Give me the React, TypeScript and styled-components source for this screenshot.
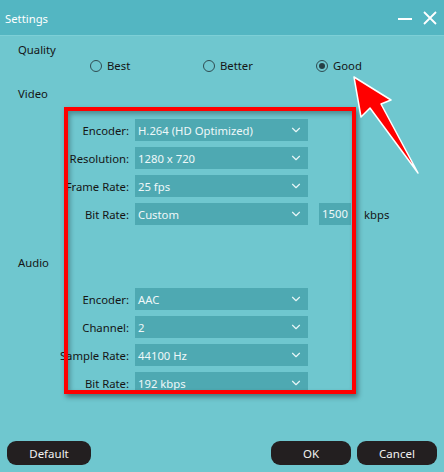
import { Fragment } from 'react'
import styled, { createGlobalStyle } from 'styled-components'
import { ChevronDown } from 'lucide-react'

const GlobalStyle = createGlobalStyle`
  html, body {
    margin: 0;
    padding: 0;
  }
  body {
    font-family: "Noto Sans", "DejaVu Sans", sans-serif;
    font-size: 11.3px;
  }
`

const Window = styled.div`
  position: relative;
  width: 444px;
  height: 472px;
  display: flex;
  flex-direction: column;
  background: #6fc7cf;
  overflow: hidden;
`

const TitleBar = styled.div`
  height: 35px;
  display: flex;
  align-items: center;
  justify-content: space-between;
  padding: 0 6px 0 5px;
  background: #53b6c2;
  border-bottom: 1px solid #7dcfd6;
  color: #ffffff;
`

const Title = styled.span`
  font-size: 11.3px;
  margin-top: 1px;
`

const WindowControls = styled.div`
  display: flex;
  align-items: center;
  gap: 9px;
`

const Body = styled.div`
  flex: 1;
  display: flex;
  flex-direction: column;
  padding-top: 6px;
`

const SectionLabel = styled.div<{ $gap?: number }>`
  padding-left: 18px;
  height: 16px;
  line-height: 16px;
  color: #151515;
  margin-top: ${({ $gap }) => $gap ?? 0}px;
`

const RadioRow = styled.div`
  display: grid;
  grid-template-columns: repeat(3, 113px);
  padding-left: 90px;
  height: 16px;
`

const RadioOption = styled.label`
  display: flex;
  align-items: center;
  gap: 5px;
  color: #151515;
  line-height: 16px;
`

const RadioDot = styled.span<{ $checked?: boolean }>`
  box-sizing: border-box;
  width: 12px;
  height: 12px;
  border-radius: 50%;
  border: 1.5px solid #2f4c52;
  display: flex;
  align-items: center;
  justify-content: center;

  &::after {
    content: '';
    width: 6px;
    height: 6px;
    border-radius: 50%;
    background: ${({ $checked }) => ($checked ? '#263f44' : 'transparent')};
  }
`

const FormGrid = styled.div<{ $gap: number }>`
  display: grid;
  grid-template-columns: 99px 173px auto;
  grid-auto-rows: 22px;
  column-gap: 6px;
  row-gap: 6px;
  padding-left: 30px;
  margin-top: ${({ $gap }) => $gap}px;
`

const FieldLabel = styled.div`
  display: flex;
  align-items: center;
  justify-content: flex-end;
  white-space: nowrap;
  color: #151515;
  grid-column: 1;
`

const Select = styled.div`
  grid-column: 2;
  display: flex;
  align-items: center;
  justify-content: space-between;
  padding: 0 5px 0 3px;
  background: #4ea9b2;
  color: #eef8f9;

  svg {
    color: #e6f5f6;
  }
`

const Extra = styled.div`
  grid-column: 3;
  display: flex;
  align-items: center;
  gap: 13px;
  padding-left: 5px;
`

const NumberBox = styled.div`
  width: 32px;
  height: 22px;
  line-height: 22px;
  padding-left: 3px;
  box-sizing: border-box;
  background: #4ea9b2;
  color: #eef8f9;
`

const Unit = styled.span`
  color: #151515;
`

const Footer = styled.div`
  margin-top: auto;
  display: flex;
  align-items: center;
  padding: 0 7px 7px 7px;
  gap: 6px;
`

const Button = styled.button<{ $width: number }>`
  width: ${({ $width }) => $width}px;
  height: 24px;
  border: none;
  border-radius: 9px;
  background: #231f20;
  color: #f2f2f2;
  font-family: inherit;
  font-size: 11.5px;
  padding: 0;
`

const Spacer = styled.div`
  flex: 1;
`

/* annotation layer drawn over the dialog */
const Highlight = styled.div`
  position: absolute;
  left: 64px;
  top: 107px;
  width: 292px;
  height: 287px;
  box-sizing: border-box;
  border: 4px solid #ff0000;
  box-shadow: 2px 3px 5px rgba(0, 0, 0, 0.4), inset 2px 3px 5px rgba(0, 0, 0, 0.3);
  pointer-events: none;
`

const ArrowLayer = styled.svg`
  position: absolute;
  left: 0;
  top: 0;
  pointer-events: none;
`

type Field = { label: string; value: string; extra?: boolean }

const videoFields: Field[] = [
  { label: 'Encoder:', value: 'H.264 (HD Optimized)' },
  { label: 'Resolution:', value: '1280 x 720' },
  { label: 'Frame Rate:', value: '25 fps' },
  { label: 'Bit Rate:', value: 'Custom', extra: true },
]

const audioFields: Field[] = [
  { label: 'Encoder:', value: 'AAC' },
  { label: 'Channel:', value: '2' },
  { label: 'Sample Rate:', value: '44100 Hz' },
  { label: 'Bit Rate:', value: '192 kbps' },
]

function FieldRows({ fields }: { fields: Field[] }) {
  return (
    <>
      {fields.map((f) => (
        <Fragment key={f.label}>
          <FieldLabel>{f.label}</FieldLabel>
          <Select>
            <span>{f.value}</span>
            <ChevronDown size={14} strokeWidth={2} />
          </Select>
          {f.extra && (
            <Extra>
              <NumberBox>1500</NumberBox>
              <Unit>kbps</Unit>
            </Extra>
          )}
        </Fragment>
      ))}
    </>
  )
}

export default function App() {
  return (
    <Window>
      <GlobalStyle />
      <TitleBar>
        <Title>Settings</Title>
        <WindowControls>
          <svg width="16" height="16" viewBox="0 0 16 16">
            <path d="M1 9h14" stroke="#fff" strokeWidth="2" />
          </svg>
          <svg width="16" height="16" viewBox="0 0 16 16">
            <path d="M2 2l12 12M14 2L2 14" stroke="#fff" strokeWidth="1.8" />
          </svg>
        </WindowControls>
      </TitleBar>
      <Body>
        <SectionLabel>Quality</SectionLabel>
        <RadioRow>
          <RadioOption>
            <RadioDot />
            Best
          </RadioOption>
          <RadioOption>
            <RadioDot />
            Better
          </RadioOption>
          <RadioOption>
            <RadioDot $checked />
            Good
          </RadioOption>
        </RadioRow>
        <SectionLabel $gap={12}>Video</SectionLabel>
        <FormGrid $gap={17}>
          <FieldRows fields={videoFields} />
        </FormGrid>
        <SectionLabel $gap={30}>Audio</SectionLabel>
        <FormGrid $gap={17}>
          <FieldRows fields={audioFields} />
        </FormGrid>
        <Footer>
          <Button $width={84}>Default</Button>
          <Spacer />
          <Button $width={80}>OK</Button>
          <Button $width={80}>Cancel</Button>
        </Footer>
      </Body>
      <Highlight />
      <ArrowLayer width="444" height="472" viewBox="0 0 444 472">
        <polygon
          points="354,77 391,100 381,104 418,173 370,108 361,117"
          fill="#ff0000"
          stroke="#ffffff"
          strokeWidth="1.5"
          strokeLinejoin="round"
        />
      </ArrowLayer>
    </Window>
  )
}
